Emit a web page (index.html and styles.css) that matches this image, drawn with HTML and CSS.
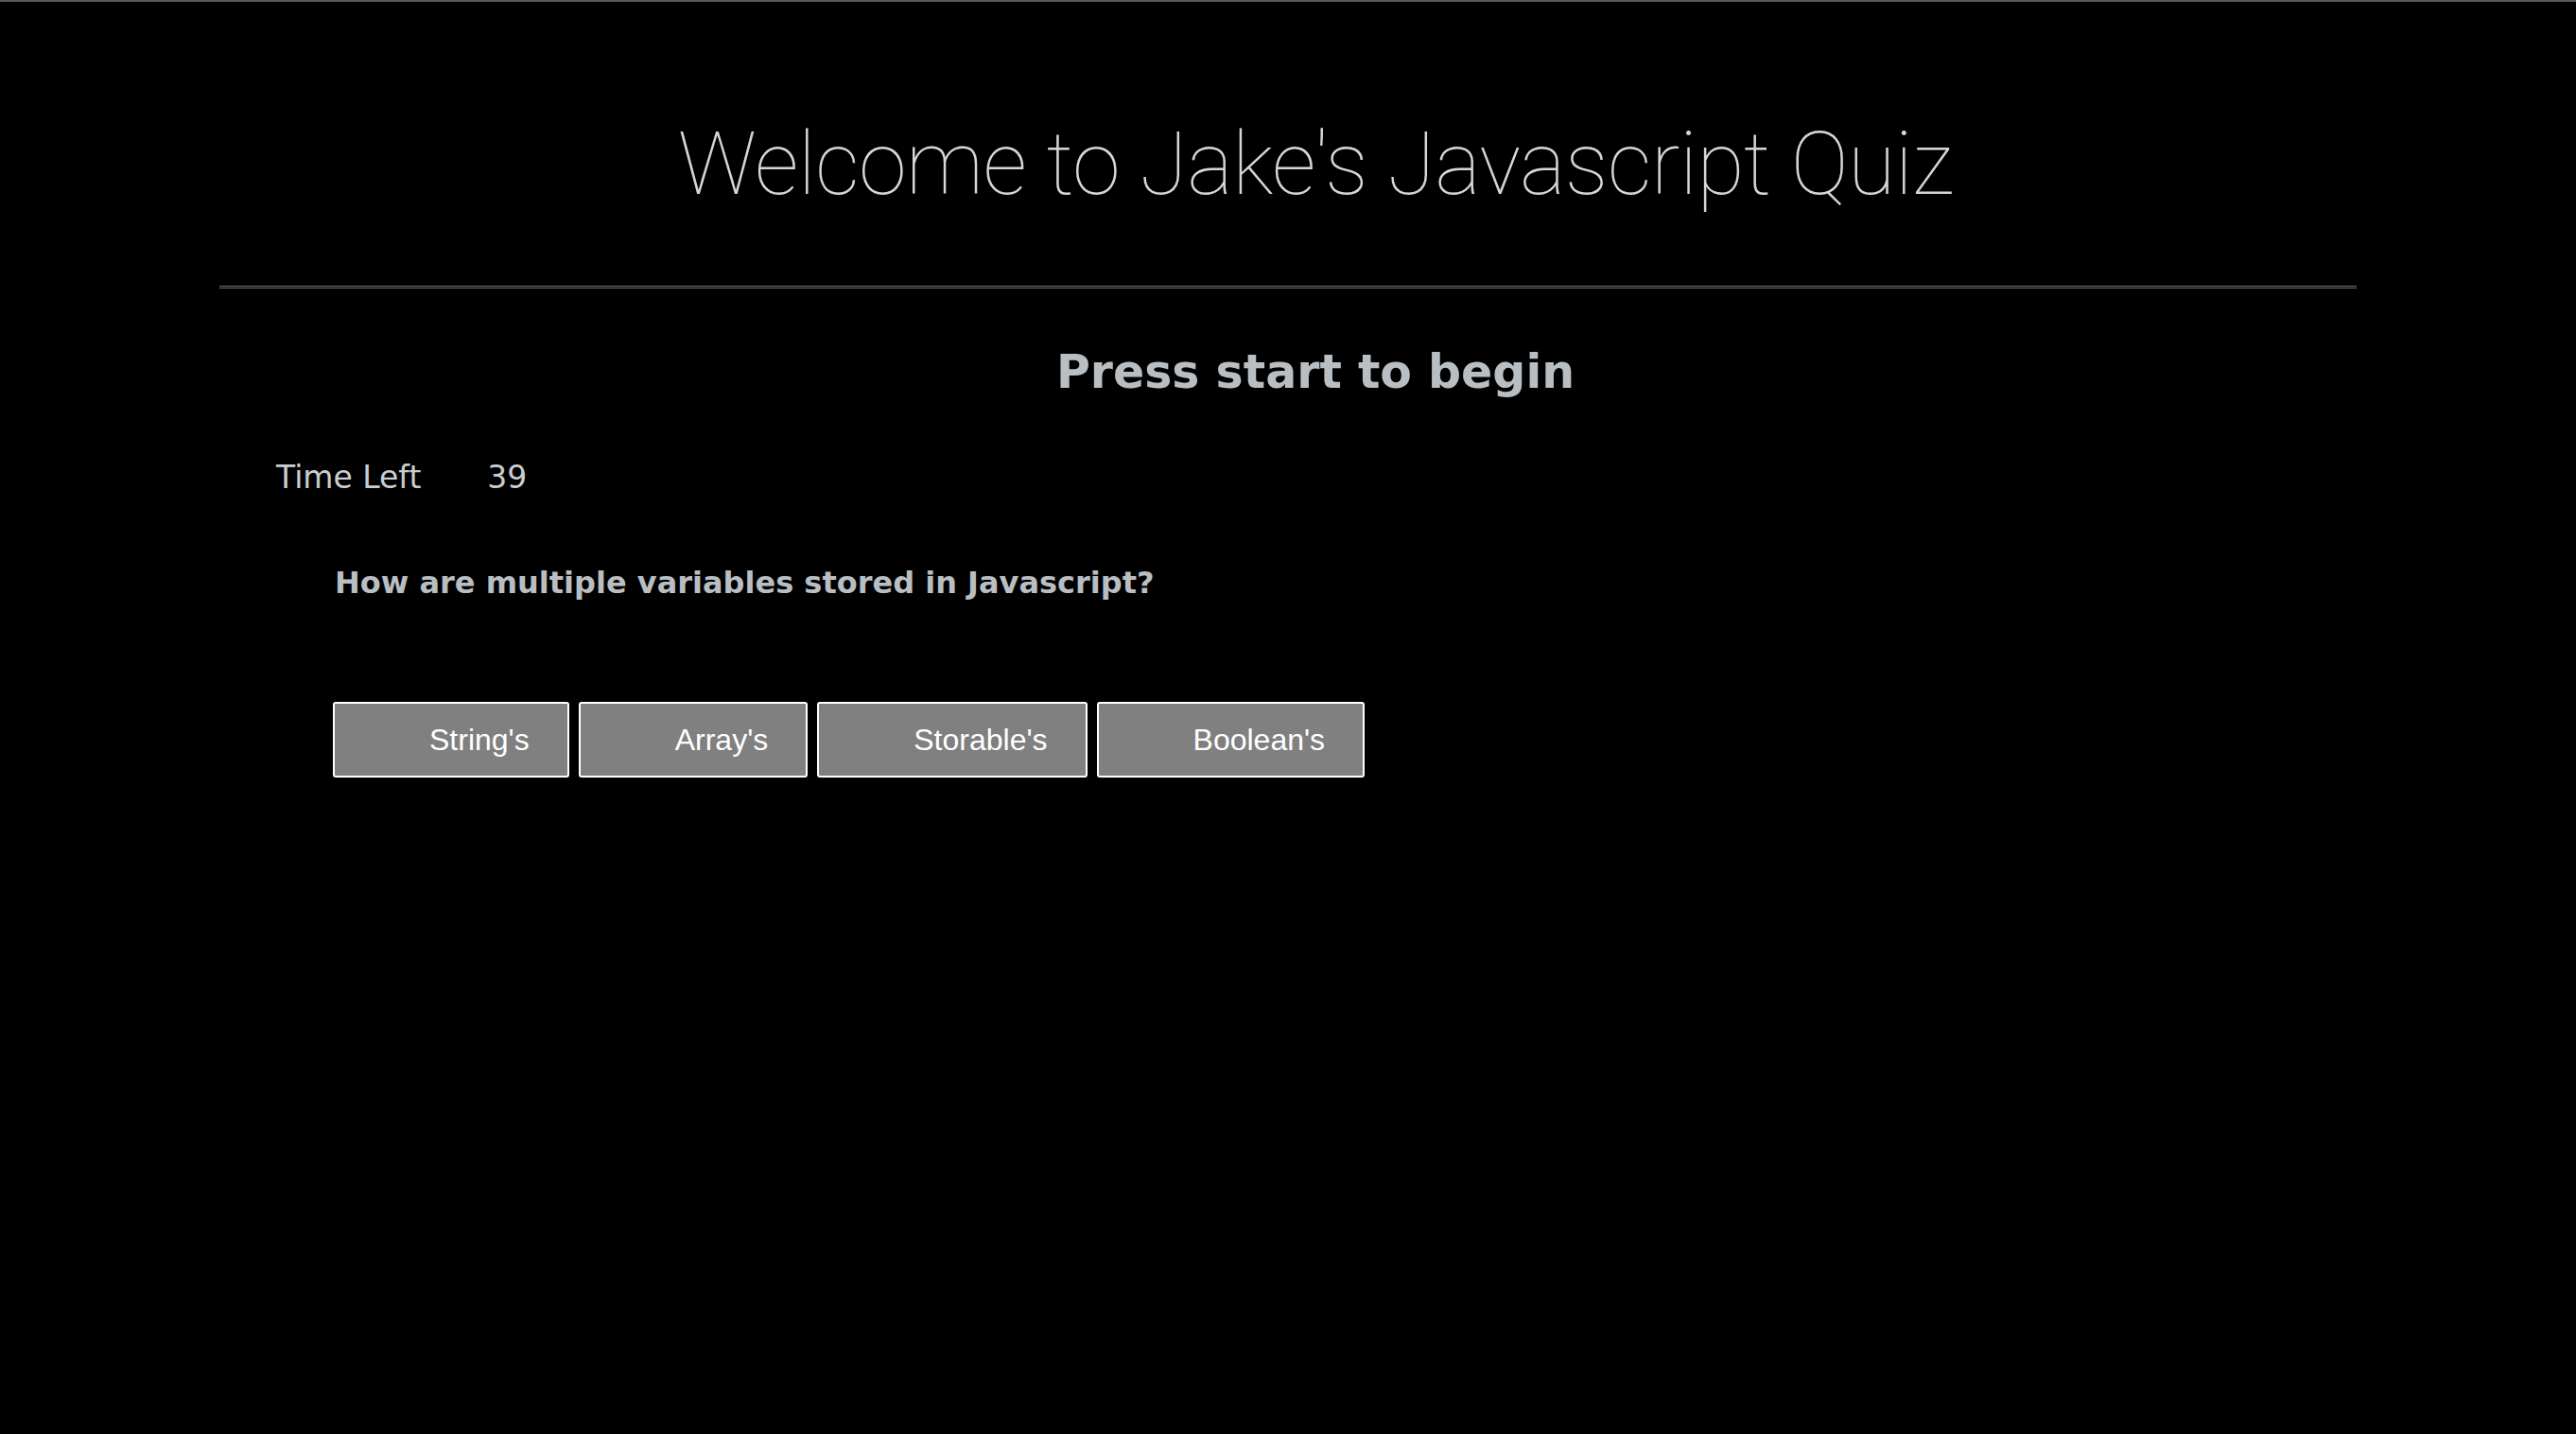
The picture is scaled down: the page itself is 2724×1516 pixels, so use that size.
FILE: index.html
```html
<!DOCTYPE html>
<html lang="en">
<head>
<meta charset="utf-8">
<title>Jake's Javascript Quiz</title>
<link rel="stylesheet" href="styles.css">
</head>
<body>
<div class="topbar"></div>
<header class="header">
  <h1 class="title">Welcome to Jake's Javascript Quiz</h1>
</header>
<hr class="divider">
<main class="quiz">
  <h2 class="status">Press start to begin</h2>
  <div class="timer">
    <span class="timer-label">Time Left</span>
    <span class="timer-value">39</span>
  </div>
  <div class="question">How are multiple variables stored in Javascript?</div>
  <div class="answers">
    <button class="answer">String's</button>
    <button class="answer">Array's</button>
    <button class="answer">Storable's</button>
    <button class="answer">Boolean's</button>
  </div>
</main>
</body>
</html>
```
FILE: styles.css
```css
html, body {
  margin: 0;
  padding: 0;
  background: #000;
}
body {
  min-height: 1516px;
  font-family: "DejaVu Sans", Verdana, sans-serif;
}
.topbar {
  height: 2px;
  background: #5a595e;
}
.header {
  padding: 126px 0 0 58px;
}
.title {
  margin: 0;
  text-align: center;
  font-family: Roboto, "Liberation Sans", sans-serif;
  font-weight: 100;
  font-size: 92px;
  line-height: 92px;
  letter-spacing: -0.7px;
  color: #d4d7da;
}
.divider {
  margin: 82px 232px 0 232px;
  height: 1px;
  border: 0;
  border-top: 1px solid #6e6e6e;
  border-bottom: 1px solid #6e6e6e;
  background: #000;
}
.quiz {
  padding-left: 58px;
}
.status {
  margin: 59px 0 0 0;
  text-align: center;
  font-family: "DejaVu Sans", Verdana, sans-serif;
  font-weight: bold;
  font-size: 49px;
  line-height: 60px;
  color: #b9bec2;
}
.timer {
  display: flex;
  gap: 70px;
  margin: 61px 0 0 234px;
  font-family: "DejaVu Sans", Verdana, sans-serif;
  font-size: 33px;
  line-height: 40px;
  color: #c9cdd0;
}
.question {
  margin: 71px 0 0 296px;
  font-family: "DejaVu Sans", Verdana, sans-serif;
  font-weight: bold;
  font-size: 32px;
  line-height: 40px;
  color: #b9bec2;
}
.answers {
  display: flex;
  gap: 10px;
  margin: 106px 0 0 294px;
}
.answer {
  height: 80px;
  margin: 0;
  padding: 0 40px 0 100px;
  border: 2px solid #fff;
  border-radius: 3px;
  background: #808080;
  color: #fff;
  font-family: "Liberation Sans", Arial, sans-serif;
  font-size: 32px;
  line-height: 76px;
}
```
